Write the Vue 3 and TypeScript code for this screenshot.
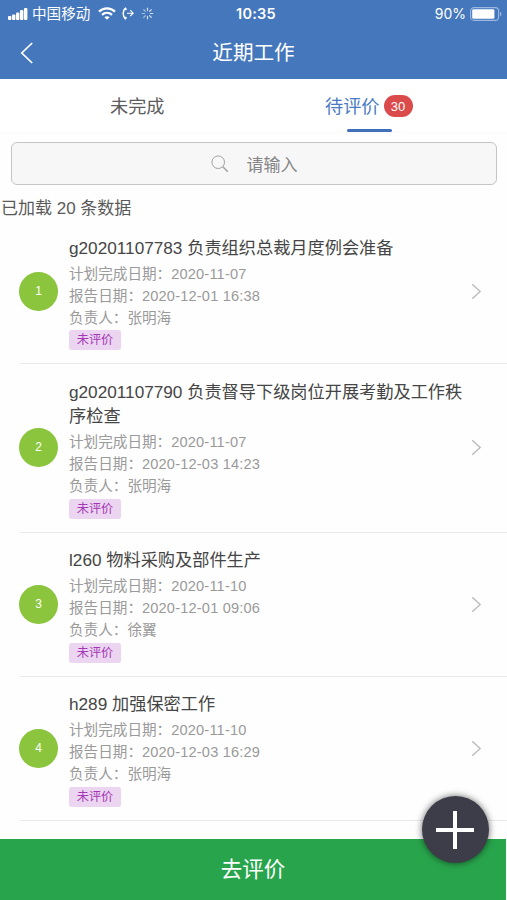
<script setup lang="ts">
interface WorkItem {
  title: string
  planned: string
  reported: string
  owner: string
}

const items: WorkItem[] = [
  { title: 'g20201107783 负责组织总裁月度例会准备', planned: '2020-11-07', reported: '2020-12-01 16:38', owner: '张明海' },
  { title: 'g20201107790 负责督导下级岗位开展考勤及工作秩序检查', planned: '2020-11-07', reported: '2020-12-03 14:23', owner: '张明海' },
  { title: 'l260 物料采购及部件生产', planned: '2020-11-10', reported: '2020-12-01 09:06', owner: '徐翼' },
  { title: 'h289 加强保密工作', planned: '2020-11-10', reported: '2020-12-03 16:29', owner: '张明海' },
]
const spokes: number[] = [0, 45, 90, 135, 180, 225, 270, 315]
</script>

<template>
  <div class="screen">
    <header class="header">
      <div class="status">
        <div class="status-left">
          <svg class="signal" width="20" height="12" viewBox="0 0 20 12" fill="#fff">
            <rect x="0" y="8" width="3.4" height="4" rx="1" />
            <rect x="4" y="6.5" width="3.4" height="5.5" rx="1" />
            <rect x="8" y="4.5" width="3.4" height="7.5" rx="1" />
            <rect x="12" y="2" width="3.4" height="10" rx="1" />
            <rect x="16" y="0" width="3.4" height="12" rx="1" />
          </svg>
          <span class="carrier">中国移动</span>
          <svg class="wifi" width="18" height="13" viewBox="0 0 18 13" fill="none" stroke="#fff" stroke-width="2.3">
            <path d="M1 4.6C5.6.2 12.4.2 17 4.6" />
            <path d="M4 7.9c2.9-2.7 7.1-2.7 10 0" />
            <path d="M6.4 10.2c1.5-1.3 3.7-1.3 5.2 0L9 12.8z" fill="#fff" stroke="none" />
          </svg>
          <svg class="forward" width="12" height="13" viewBox="0 0 12 13" fill="none" stroke="#fff" stroke-width="1.1">
            <path d="M3.6 1.2C.4 3.5.4 9.5 3.6 11.8" stroke-width="1.5" />
            <path d="M2.8.9l1.6 2M2.8 12.1l1.6-2" stroke-width="1.7" />
            <path d="M5 6.2h6M8.2 3.2l3 3-3 3" />
          </svg>
          <svg class="spinner" width="13" height="13" viewBox="-6.5 -6.5 13 13" stroke="#fff" stroke-width="1.2" stroke-linecap="round">
            <line v-for="a in spokes" :key="a" x1="0" y1="-2.9" x2="0" y2="-5.3" :transform="`rotate(${a})`" :opacity="a > 180 ? 0.5 : 0.75" />
          </svg>
        </div>
        <span class="clock">10:35</span>
        <div class="status-right">
          <span>90%</span>
          <svg width="32" height="14" viewBox="0 0 32 14">
            <rect x=".6" y=".6" width="28" height="12.8" rx="3.4" fill="none" stroke="#9db9e2" stroke-width="1.1" />
            <rect x="2.2" y="2.3" width="22.2" height="9.4" rx="1.3" fill="#fff" />
            <path d="M30 4.8c1.9.7 1.9 3.7 0 4.4z" fill="#9db9e2" />
          </svg>
        </div>
      </div>
      <div class="nav">
        <svg class="back" width="14" height="22" viewBox="0 0 14 22" fill="none" stroke="#fff" stroke-width="1.7">
          <path d="M12.2 1L1.8 11l10.4 10" />
        </svg>
        <h1>近期工作</h1>
      </div>
    </header>

    <nav class="tabs">
      <div class="tab"><span class="tab-label">未完成</span></div>
      <div class="tab active">
        <div class="tab-row"><span class="tab-label">待评价</span><span class="badge">30</span></div>
        <i class="underline"></i>
      </div>
    </nav>

    <div class="search">
      <svg width="18" height="18" viewBox="0 0 18 18" fill="none" stroke="#a2a2a2">
        <circle cx="7.2" cy="7.2" r="6.3" stroke-width="1" />
        <path d="M11.8 11.8l5 5" stroke-width="1.6" />
      </svg>
      <span>请输入</span>
    </div>
    <p class="loaded">已加载 20 条数据</p>

    <main class="list">
      <article v-for="(item, i) in items" :key="item.title" class="item">
        <span class="index">{{ i + 1 }}</span>
        <div class="body">
          <h2>{{ item.title }}</h2>
          <div class="meta">
            <div>计划完成日期：<span class="num">{{ item.planned }}</span></div>
            <div>报告日期：<span class="num">{{ item.reported }}</span></div>
            <div>负责人：{{ item.owner }}</div>
          </div>
          <span class="tag">未评价</span>
        </div>
        <svg class="chevron" width="11" height="17" viewBox="0 0 11 17" fill="none" stroke="#b9b9b9" stroke-width="1.3">
          <path d="M1.2 1.2l8 7.3-8 7.3" />
        </svg>
      </article>
    </main>

    <footer class="submit">去评价</footer>
    <button class="fab" type="button">
      <svg width="38" height="38" viewBox="0 0 38 38" stroke="#fff" stroke-width="4">
        <path d="M19 0v38M0 19h38" />
      </svg>
    </button>
  </div>
</template>

<style>
body {
  margin: 0;
  background: #fff;
}
</style>

<style scoped>
.screen {
  position: relative;
  display: flex;
  flex-direction: column;
  width: 507px;
  height: 900px;
  overflow: hidden;
  background: #fefefe;
  color: #464646;
  font-family: "Liberation Sans", "Noto Sans CJK SC", sans-serif;
}
.header {
  flex: none;
  height: 79px;
  background: #4477bc;
  color: #fff;
}
.status {
  display: grid;
  grid-template-columns: 1fr auto 1fr;
  align-items: center;
  height: 27px;
  padding: 0 5px 0 8px;
  box-sizing: border-box;
  font-size: 14px;
  line-height: 27px;
}
.status-left {
  display: flex;
  align-items: center;
}
.carrier {
  margin-left: 4px;
  padding-top: 1px;
  font-size: 14.6px;
  line-height: 26px;
}
.wifi {
  margin-left: 8px;
}
.forward {
  margin-left: 6px;
}
.spinner {
  margin-left: 7px;
}
.clock {
  margin-left: 2px;
  font-family: Inter, "Liberation Sans", sans-serif;
  font-size: 14.5px;
  font-weight: 600;
  letter-spacing: 0.25px;
}
.status-right {
  display: flex;
  align-items: center;
  justify-content: flex-end;
  gap: 4px;
  font-family: Inter, "Liberation Sans", sans-serif;
}
.nav {
  display: grid;
  grid-template-columns: 60px 1fr 60px;
  align-items: center;
  height: 51px;
}
.back {
  margin-left: 20px;
}
h1 {
  margin: 0;
  text-align: center;
  font-size: 20.6px;
  font-weight: 400;
  line-height: 30px;
}
.tabs {
  flex: none;
  display: flex;
  height: 54px;
  padding: 0 21px;
  border-bottom: 1px solid #fafafa;
  box-sizing: border-box;
  background: #fff;
}
.tab {
  flex: 1;
  display: flex;
  flex-direction: column;
  align-items: center;
  padding-top: 13px;
  font-size: 18.2px;
  line-height: 28px;
  color: #5d5d5d;
}
.tab-label {
  padding-top: 1px;
}
.tab.active {
  color: #4a7bc2;
}
.tab-row {
  display: flex;
  align-items: center;
  gap: 4px;
  height: 28px;
  margin-right: 2px;
}
.badge {
  width: 29px;
  height: 22px;
  border-radius: 11px;
  background: #dc4b4b;
  color: #fff;
  font-size: 13px;
  line-height: 23px;
  text-align: center;
}
.underline {
  width: 45px;
  height: 4px;
  margin-top: 9px;
  border-radius: 2px;
  background: #4070b9;
}
.search {
  flex: none;
  display: flex;
  align-items: center;
  justify-content: center;
  gap: 18px;
  height: 43px;
  margin: 9px 10px 0 11px;
  border: 1px solid #c5c5c5;
  border-radius: 6px;
  box-sizing: border-box;
  background: #f7f7f7;
  color: #858585;
  font-size: 17px;
}
.loaded {
  flex: none;
  margin: 10px 0 0 1px;
  height: 25px;
  font-size: 17px;
  line-height: 27px;
  color: #5a5a5a;
}
.list {
  flex: 1;
  min-height: 0;
  overflow: hidden;
}
.item {
  display: flex;
  align-items: center;
  margin-left: 20px;
  padding-right: 25px;
  border-bottom: 1px solid #e8e8e8;
}
.index {
  flex: none;
  width: 39px;
  height: 39px;
  margin-left: -1px;
  border-radius: 50%;
  background: #8bc53d;
  color: #fff;
  font-size: 12px;
  line-height: 39px;
  text-align: center;
}
.body {
  flex: 1;
  display: flex;
  flex-direction: column;
  align-items: flex-start;
  margin-left: 11px;
  padding: 15.5px 0 13px;
}
h2 {
  width: 400px;
  margin: 0;
  font-size: 17.2px;
  font-weight: 400;
  line-height: 24.5px;
  color: #454545;
}
.meta {
  margin-top: 2.5px;
  font-size: 14.6px;
  line-height: 22px;
  color: #9a9a9a;
}
.num {
  letter-spacing: 0.18px;
}
.tag {
  width: 52px;
  height: 20px;
  margin-top: 1.5px;
  border-radius: 3px;
  background: #ebd5f0;
  color: #a636b8;
  font-size: 12.2px;
  line-height: 20px;
  text-align: center;
}
.chevron {
  flex: none;
  margin-left: -6px;
}
.submit {
  flex: none;
  width: 506px;
  height: 61px;
  background: #28a54c;
  color: #fff;
  font-size: 21.5px;
  line-height: 63px;
  text-align: center;
}
.fab {
  position: absolute;
  left: 421.5px;
  top: 796px;
  display: flex;
  align-items: center;
  justify-content: center;
  width: 67px;
  height: 67px;
  padding: 0;
  border: 0;
  border-radius: 50%;
  background: #3c3d49;
  box-shadow: 0 0 7px rgba(0, 0, 0, 0.6);
}
</style>
